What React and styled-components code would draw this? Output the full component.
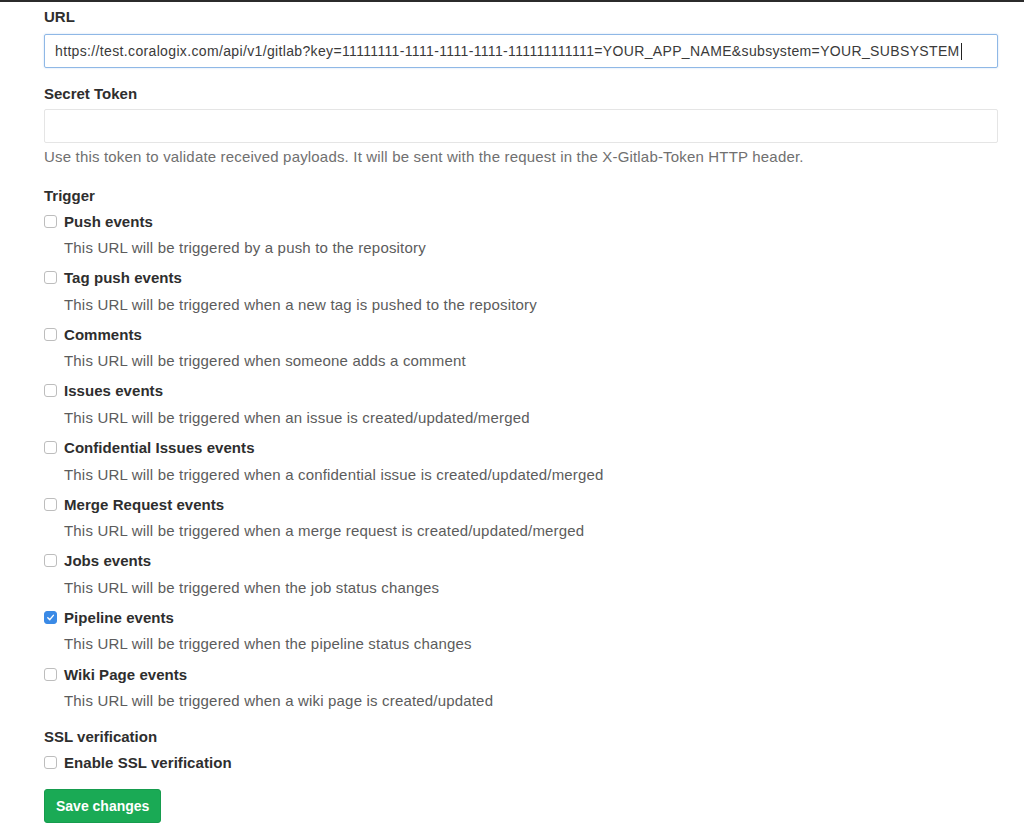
import React from "react";
import styled, { createGlobalStyle } from "styled-components";

const Global = createGlobalStyle`
  html, body { margin: 0; padding: 0; background: #fff; }
  body { font-family: "Liberation Sans", Arial, sans-serif; color: #2e2e2e; }
  * { box-sizing: border-box; }
`;

const Page = styled.div`
  border-top: 2px solid #2b2b2b;
  padding: 5px 26px 10px 44px;
  width: 1024px;
`;

const FieldLabel = styled.div`
  font-size: 15px;
  font-weight: bold;
  line-height: 20px;
  margin-top: ${(p) => p.$mt || 0}px;
  color: #2e2e2e;
`;

const TextInput = styled.div`
  height: 34px;
  margin-top: ${(p) => p.$mt || 0}px;
  border: 1px solid ${(p) => (p.$focus ? "#8fb8e6" : "#e5e5e5")};
  box-shadow: ${(p) => (p.$focus ? "0 0 2px rgba(80,140,220,0.35)" : "none")};
  border-radius: 2px;
  padding: 0 10px;
  display: flex;
  align-items: center;
  font-size: 14px;
  letter-spacing: 0.35px;
  color: #3a3a3a;
  white-space: nowrap;
  overflow: hidden;
`;

const Caret = styled.span`
  display: inline-block;
  width: 1px;
  height: 17px;
  background: #222;
  margin-left: 1px;
`;

const Help = styled.div`
  font-size: 15px;
  letter-spacing: 0.18px;
  line-height: 20px;
  color: #707070;
  margin-top: 4px;
`;

const Item = styled.div`
  margin-top: ${(p) => p.$mt}px;
`;

const CheckRow = styled.label`
  display: flex;
  align-items: center;
  height: 20px;
  font-size: 15px;
  letter-spacing: 0.05px;
  font-weight: bold;
  color: #2e2e2e;
`;

const Box = styled.span`
  width: 13px;
  height: 13px;
  border-radius: 3px;
  border: 1px solid ${(p) => (p.$checked ? "#3a8ae6" : "#bdbdbd")};
  background: ${(p) => (p.$checked ? "#3a8ae6" : "#fff")};
  margin-right: 7px;
  display: flex;
  align-items: center;
  justify-content: center;
  flex: none;
`;

const Desc = styled.div`
  font-size: 15px;
  letter-spacing: 0.18px;
  line-height: 20px;
  color: #5c5c5c;
  margin-top: 7px;
  padding-left: 20px;
`;

const SaveButton = styled.button`
  margin-top: 17px;
  height: 34px;
  padding: 0 11px;
  background: #1aaa55;
  border: 1px solid #169c4e;
  border-radius: 3px;
  color: #fff;
  font-family: "Liberation Sans", Arial, sans-serif;
  font-size: 14px;
  font-weight: bold;
  display: block;
`;

const Check = ({ checked }) => (
  <Box $checked={checked}>
    {checked && (
      <svg width="9" height="9" viewBox="0 0 10 10">
        <path d="M2 5.2 L4.2 7.4 L8.2 2.6" fill="none" stroke="#fff" strokeWidth="1.6" strokeLinecap="round" strokeLinejoin="round" />
      </svg>
    )}
  </Box>
);

const triggers = [
  ["Push events", "This URL will be triggered by a push to the repository"],
  ["Tag push events", "This URL will be triggered when a new tag is pushed to the repository"],
  ["Comments", "This URL will be triggered when someone adds a comment"],
  ["Issues events", "This URL will be triggered when an issue is created/updated/merged"],
  ["Confidential Issues events", "This URL will be triggered when a confidential issue is created/updated/merged"],
  ["Merge Request events", "This URL will be triggered when a merge request is created/updated/merged"],
  ["Jobs events", "This URL will be triggered when the job status changes"],
  ["Pipeline events", "This URL will be triggered when the pipeline status changes", true],
  ["Wiki Page events", "This URL will be triggered when a wiki page is created/updated"],
];

export default function App() {
  return (
    <>
      <Global />
      <Page>
        <FieldLabel>URL</FieldLabel>
        <TextInput $focus $mt={7}>
          https://test.coralogix.com/api/v1/gitlab?key=11111111-1111-1111-1111-111111111111=YOUR_APP_NAME&amp;subsystem=YOUR_SUBSYSTEM
          <Caret />
        </TextInput>
        <FieldLabel $mt={16}>Secret Token</FieldLabel>
        <TextInput $mt={5} />
        <Help>Use this token to validate received payloads. It will be sent with the request in the X-Gitlab-Token HTTP header.</Help>
        <FieldLabel $mt={19}>Trigger</FieldLabel>
        {triggers.map(([label, desc, checked], i) => (
          <Item key={label} $mt={i === 0 ? 5 : 9.625}>
            <CheckRow>
              <Check checked={checked} />
              {label}
            </CheckRow>
            <Desc>{desc}</Desc>
          </Item>
        ))}
        <FieldLabel $mt={16}>SSL verification</FieldLabel>
        <Item $mt={5}>
          <CheckRow>
            <Check />
            Enable SSL verification
          </CheckRow>
        </Item>
        <SaveButton>Save changes</SaveButton>
      </Page>
    </>
  );
}
